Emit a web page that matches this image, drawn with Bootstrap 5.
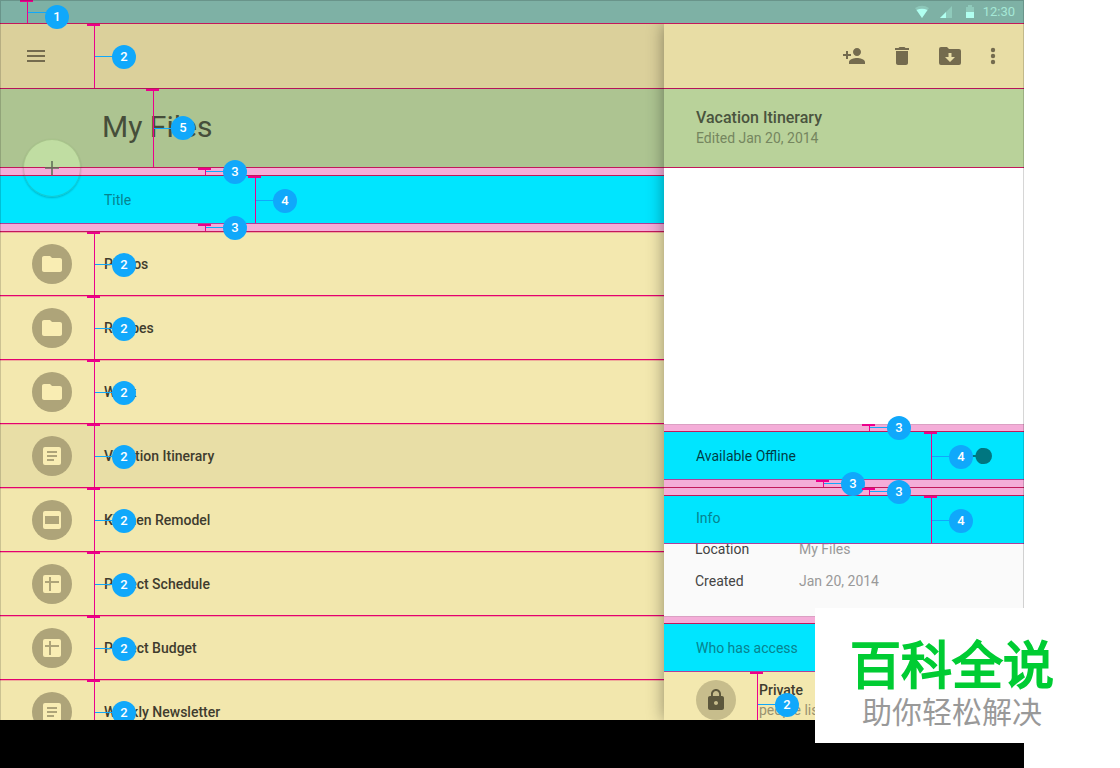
<!DOCTYPE html>
<html lang="en">
<head>
<meta charset="utf-8">
<meta name="viewport" content="width=device-width, initial-scale=1">
<title>My Files – keylines</title>
<link href="https://cdn.jsdelivr.net/npm/bootstrap@5.3.0/dist/css/bootstrap.min.css" rel="stylesheet">
<style>
:root { --line: #ec008c; --line-dim: #c2185b; --cyan: #00e5ff; --pink: #f4add8; --sand: #f3e8af; --note: #10a8fb; }
body { font-family: Roboto, "Noto Sans CJK SC", sans-serif; font-size: 14px; line-height: 20px; background: #fff; color: #3f3c2e; }
.device { margin-right: 96px; }
.screen { min-height: 0; }
.screen::after { content: ""; position: absolute; inset: 0; border: solid rgba(0,0,0,.16); border-width: 1px 1px 0; pointer-events: none; z-index: 6; }
.system-nav { height: 48px; background: #000; }
.status-bar { height: 24px; background: #7eb1a5; border-bottom: 1px solid var(--line-dim); gap: 5px; padding-right: 9px; font-size: 13px; color: #a5e8d6; z-index: 4; }
.panes { min-height: 0; }
.details { width: 360px; background: #fff; box-shadow: 0 0 16px rgba(0,0,0,.4); z-index: 3; }
.tool-row { height: 65px; border-bottom: 1px solid #b5125b; background: #dbd09b; color: #746b4e; padding: 0 24px; }
.details .tool-row { background: #e8dda5; gap: 24px; }
.tool-row .btn { color: inherit; border: 0; line-height: 0; }
.head-row { height: 79px; border-bottom: 1px solid var(--line-dim); background: #adc491; }
.details .head-row { background: #b9d29a; padding: 0 32px; }
.head-row h1 { font-size: 30px; line-height: 40px; font-weight: 400; color: #464e3a; margin: 0 0 2px 102px; }
.head-row h2 { font-size: 16px; line-height: 20px; font-weight: 500; color: #4a543e; margin: 0; }
.head-row p { color: #75865f; margin: 0; }
.band-pink { height: 8px; background: var(--pink); border-bottom: 1px solid var(--line-dim); }
.band-top { box-shadow: inset 0 1px #dba0c3; }
.band-cyan { height: 48px; background: var(--cyan); border-bottom: 1px solid #b0409a; color: #07838f; }
.files .band-cyan { padding-left: 104px; }
.details .band-cyan { padding: 0 32px; }
.file-row { height: 64px; flex-shrink: 0; background: var(--sand); border: 0; border-bottom: 1px solid #e4006f; box-shadow: inset 0 1px #efab9b; padding: 0 32px; gap: 32px; color: #3f3c2e; font-weight: 500; line-height: 22px; text-decoration: none; }
.file-row:nth-child(n+5) { background: #f2e7ad; }
.file-row.picked { background: #e8dea6; }
.disc { width: 40px; height: 40px; border-radius: 50%; background: #aea479; color: #f9edb3; flex-shrink: 0; }
.disc-lock { background: #c7bd8c; color: #5c573c; }
.gauge { position: absolute; top: 0; bottom: 0; width: 1px; background: var(--line); z-index: 2; }
.gauge::before { content: ""; position: absolute; left: -7px; top: 0; width: 13px; height: 2px; background: var(--line); }
.gauge::after { content: ""; position: absolute; left: 1px; top: 50%; width: 20px; height: 1px; background: var(--note); }
.gauge-num { position: absolute; left: 18px; top: 50%; margin-top: -11px; width: 24px; height: 24px; border-radius: 50%; background: var(--note); color: #fff; font-size: 13px; font-weight: 500; line-height: 24px; text-align: center; z-index: 1; }
.band-pink .gauge-num, .head-row .gauge-num { margin-top: -12px; }
.band-pink .gauge::after { margin-top: -1px; }
.status-bar .gauge-num { margin-top: -7px; }
.at-27 { left: 27px; } .at-93 { left: 93px; } .at-94 { left: 94px; } .at-153 { left: 153px; } .at-205 { left: 205px; } .at-255 { left: 255px; }
.at-159 { left: 159px; } .at-267 { left: 267px; }
.fab { position: absolute; left: 23px; bottom: -30px; width: 58px; height: 58px; border: 1px solid rgba(80,110,60,.22); border-radius: 50%; padding: 0; z-index: 2; color: #62705a; line-height: 0;
  background: linear-gradient(#c0dda2 28px, var(--line-dim) 28px 29px, var(--pink) 29px 36px, var(--line-dim) 36px 37px, var(--cyan) 37px) border-box; box-shadow: 0 1px 2px rgba(0,0,0,.22); }
.preview { height: 256px; }
.toggle.form-check-input { width: 28px; height: 16px; margin: 0; border: 0; border-radius: 8px; background: radial-gradient(circle at 20px 8px, #007680 8px, transparent 9px), linear-gradient(#007680, #007680) 0 7px / 20px 2px no-repeat; }
.facts { height: 72px; background: #fafafa; padding: 0 31px; }
.facts dl { margin: -11px 0 0; }
.facts dl > div { height: 32px; }
.facts dt { width: 104px; font-weight: 400; color: #444; }
.facts dd { margin: 0; color: #999; }
.access-row { height: 64px; background: var(--sand); padding: 0 32px 8px; gap: 23px; }
.access-row strong { font-weight: 500; color: #3f3c2e; }
.access-row span.hint { color: #9a9270; }
.stamp { position: absolute; right: 0; bottom: 25px; width: 305px; height: 135px; background: #fff; padding: 24px 0 0 35px; z-index: 8; font-family: "Noto Sans CJK SC", sans-serif; white-space: nowrap; }
.stamp b { display: block; font-size: 51px; line-height: 60px; font-weight: 400; -webkit-text-stroke: 2px #00cc33; color: #00cc33; }
.stamp small { display: block; font-size: 30px; line-height: 36px; color: #999; padding-left: 12px; }
svg { fill: currentColor; flex-shrink: 0; }
</style>
</head>
<body>
<svg class="d-none" aria-hidden="true">
  <symbol id="folder" viewBox="0 0 24 24"><path d="M10 4H4c-1.100 0-1.990.9-1.990 2L2 18c0 1.100.9 2 2 2h16c1.100 0 2-.9 2-2V8c0-1.100-.9-2-2-2h-8z"/></symbol>
  <symbol id="doc" viewBox="0 0 24 24"><path fill-rule="evenodd" d="M5 3h14a2 2 0 0 1 2 2v14a2 2 0 0 1-2 2H5a2 2 0 0 1-2-2V5a2 2 0 0 1 2-2zM7 7v2h10V7zM7 11v2h10v-2zM7 15v2h7v-2z"/></symbol>
  <symbol id="slide" viewBox="0 0 24 24"><path fill-rule="evenodd" d="M5 3h14a2 2 0 0 1 2 2v14a2 2 0 0 1-2 2H5a2 2 0 0 1-2-2V5a2 2 0 0 1 2-2zM5 8v8h14V8z"/></symbol>
  <symbol id="sheet" viewBox="0 0 24 24"><path fill-rule="evenodd" d="M5 3h14a2 2 0 0 1 2 2v14a2 2 0 0 1-2 2H5a2 2 0 0 1-2-2V5a2 2 0 0 1 2-2zM9 5v4H5v2h4v8h2v-8h8V9h-8V5z"/></symbol>
</svg>
<div class="device d-flex flex-column vh-100">
  <div class="screen position-relative d-flex flex-column flex-grow-1 overflow-hidden">
    <div class="status-bar position-relative d-flex align-items-center justify-content-end flex-shrink-0">
      <span class="gauge at-27"><span class="gauge-num">1</span></span>
      <span class="d-flex gap-2">
        <svg width="16" height="16" viewBox="0 0 16 16"><path d="M1 4Q8-.5 15 4L8 14z" opacity=".4"/><path fill="#b0fff0" d="M2.500 6Q8 3.500 13.500 6L8 14z"/></svg>
        <svg width="16" height="16" viewBox="0 0 16 16"><path d="M14 2v12H2z" opacity=".45"/><path fill="#b0fff0" d="M8 8v6H2z"/></svg>
        <svg width="16" height="16" viewBox="0 0 16 16"><path d="M4 3h2V1h4v2h2v5H4z" opacity=".45"/><path fill="#b0fff0" d="M4 8h8v6H4z"/></svg>
      </span>
      <span>12:30</span>
    </div>
    <div class="panes d-flex flex-grow-1 overflow-hidden">
      <main class="files d-flex flex-column flex-grow-1 overflow-hidden">
        <div class="tool-row position-relative d-flex align-items-center flex-shrink-0">
          <button type="button" class="btn p-0" aria-label="Menu"><svg width="24" height="24" viewBox="0 0 24 24"><path d="M3 18h18v-2H3zm0-5h18v-2H3zm0-7v2h18V6z"/></svg></button>
          <span class="gauge at-94"><span class="gauge-num">2</span></span>
        </div>
        <div class="head-row position-relative d-flex align-items-center flex-shrink-0">
          <h1>My Files</h1>
          <span class="gauge at-153"><span class="gauge-num">5</span></span>
          <button type="button" class="fab" aria-label="Add"><svg width="24" height="24" viewBox="0 0 24 24"><path d="M19 12.800h-6.200V19h-1.600v-6.200H5v-1.600h6.200V5h1.600v6.200H19z"/></svg></button>
        </div>
        <div class="band-pink position-relative flex-shrink-0"><span class="gauge at-205"><span class="gauge-num">3</span></span></div>
        <div class="band-cyan position-relative d-flex align-items-center flex-shrink-0">Title<span class="gauge at-255"><span class="gauge-num">4</span></span></div>
        <div class="band-pink position-relative flex-shrink-0"><span class="gauge at-205"><span class="gauge-num">3</span></span></div>
        <nav class="d-flex flex-column" aria-label="Files">
          <a href="#" class="file-row position-relative d-flex align-items-center"><span class="disc d-flex align-items-center justify-content-center"><svg width="24" height="24"><use href="#folder"/></svg></span>Photos<span class="gauge at-94"><span class="gauge-num">2</span></span></a>
          <a href="#" class="file-row position-relative d-flex align-items-center"><span class="disc d-flex align-items-center justify-content-center"><svg width="24" height="24"><use href="#folder"/></svg></span>Recipes<span class="gauge at-94"><span class="gauge-num">2</span></span></a>
          <a href="#" class="file-row position-relative d-flex align-items-center"><span class="disc d-flex align-items-center justify-content-center"><svg width="24" height="24"><use href="#folder"/></svg></span>Work<span class="gauge at-94"><span class="gauge-num">2</span></span></a>
          <a href="#" class="file-row picked position-relative d-flex align-items-center"><span class="disc d-flex align-items-center justify-content-center"><svg width="24" height="24"><use href="#doc"/></svg></span>Vacation Itinerary<span class="gauge at-94"><span class="gauge-num">2</span></span></a>
          <a href="#" class="file-row position-relative d-flex align-items-center"><span class="disc d-flex align-items-center justify-content-center"><svg width="24" height="24"><use href="#slide"/></svg></span>Kitchen Remodel<span class="gauge at-94"><span class="gauge-num">2</span></span></a>
          <a href="#" class="file-row position-relative d-flex align-items-center"><span class="disc d-flex align-items-center justify-content-center"><svg width="24" height="24"><use href="#sheet"/></svg></span>Project Schedule<span class="gauge at-94"><span class="gauge-num">2</span></span></a>
          <a href="#" class="file-row position-relative d-flex align-items-center"><span class="disc d-flex align-items-center justify-content-center"><svg width="24" height="24"><use href="#sheet"/></svg></span>Project Budget<span class="gauge at-94"><span class="gauge-num">2</span></span></a>
          <a href="#" class="file-row position-relative d-flex align-items-center"><span class="disc d-flex align-items-center justify-content-center"><svg width="24" height="24"><use href="#doc"/></svg></span>Weekly Newsletter<span class="gauge at-94"><span class="gauge-num">2</span></span></a>
        </nav>
      </main>
      <aside class="details position-relative flex-shrink-0">
        <div class="tool-row d-flex align-items-center justify-content-end">
          <button type="button" class="btn p-0" aria-label="Add person"><svg width="24" height="24" viewBox="0 0 24 24"><path d="M15 12c2.210 0 4-1.790 4-4s-1.790-4-4-4-4 1.790-4 4 1.790 4 4 4zm-9-2V7H4v3H1v2h3v3h2v-3h3v-2zm9 4c-2.670 0-8 1.340-8 4v2h16v-2c0-2.660-5.330-4-8-4z"/></svg></button>
          <button type="button" class="btn p-0" aria-label="Delete"><svg width="24" height="24" viewBox="0 0 24 24"><path d="M6 19c0 1.100.9 2 2 2h8c1.100 0 2-.9 2-2V7H6zM19 4h-3.500l-1-1h-5l-1 1H5v2h14z"/></svg></button>
          <button type="button" class="btn p-0" aria-label="Move to folder"><svg width="24" height="24" viewBox="0 0 24 24"><path fill-rule="evenodd" d="M9 3H3a2 2 0 0 0-2 2v14a2 2 0 0 0 2 2h18a2 2 0 0 0 2-2V7a2 2 0 0 0-2-2H11zM10.500 9h3v4H17l-5 5-5-5h3.500z"/></svg></button>
          <button type="button" class="btn p-0" aria-label="More"><svg width="14" height="24" viewBox="5 0 14 24"><circle cx="12" cy="6" r="2.200"/><circle cx="12" cy="12" r="2.200"/><circle cx="12" cy="18" r="2.200"/></svg></button>
        </div>
        <div class="head-row d-flex flex-column justify-content-center">
          <h2>Vacation Itinerary</h2>
          <p>Edited Jan 20, 2014</p>
        </div>
        <div class="preview"></div>
        <div class="band-pink band-top position-relative"><span class="gauge at-205"><span class="gauge-num">3</span></span></div>
        <div class="band-cyan position-relative d-flex align-items-center justify-content-between">
          <label for="offline" class="text-black text-opacity-75">Available Offline</label>
          <input class="toggle form-check-input" type="checkbox" role="switch" id="offline" checked>
          <span class="gauge at-267"><span class="gauge-num">4</span></span>
        </div>
        <div class="band-pink position-relative"><span class="gauge at-159"><span class="gauge-num">3</span></span></div>
        <div class="band-pink position-relative"><span class="gauge at-205"><span class="gauge-num">3</span></span></div>
        <div class="band-cyan position-relative d-flex align-items-center pb-1">Info<span class="gauge at-267"><span class="gauge-num">4</span></span></div>
        <div class="facts overflow-hidden">
          <dl>
            <div class="d-flex align-items-center"><dt>Location</dt><dd>My Files</dd></div>
            <div class="d-flex align-items-center"><dt>Created</dt><dd>Jan 20, 2014</dd></div>
          </dl>
        </div>
        <div class="band-pink band-top"></div>
        <div class="band-cyan d-flex align-items-center">Who has access</div>
        <div class="access-row position-relative d-flex align-items-center">
          <span class="disc disc-lock d-flex align-items-center justify-content-center"><svg width="24" height="24" viewBox="0 0 24 24"><path d="M18 8h-1V6c0-2.760-2.240-5-5-5S7 3.240 7 6v2H6c-1.100 0-2 .9-2 2v10c0 1.100.9 2 2 2h12c1.100 0 2-.9 2-2V10c0-1.100-.9-2-2-2zm-6 9c-1.100 0-2-.9-2-2s.9-2 2-2 2 .9 2 2-.9 2-2 2zm3.100-9H8.900V6c0-1.710 1.390-3.100 3.100-3.100s3.100 1.390 3.100 3.100z"/></svg></span>
          <span class="d-flex flex-column"><strong>Private</strong><span class="hint">people listed</span></span>
          <span class="gauge at-93"><span class="gauge-num">2</span></span>
        </div>
      </aside>
    </div>
  </div>
  <div class="system-nav flex-shrink-0"></div>
</div>
<div class="stamp" lang="zh-CN"><b>百科全说</b><small>助你轻松解决</small></div>
</body>
</html>
